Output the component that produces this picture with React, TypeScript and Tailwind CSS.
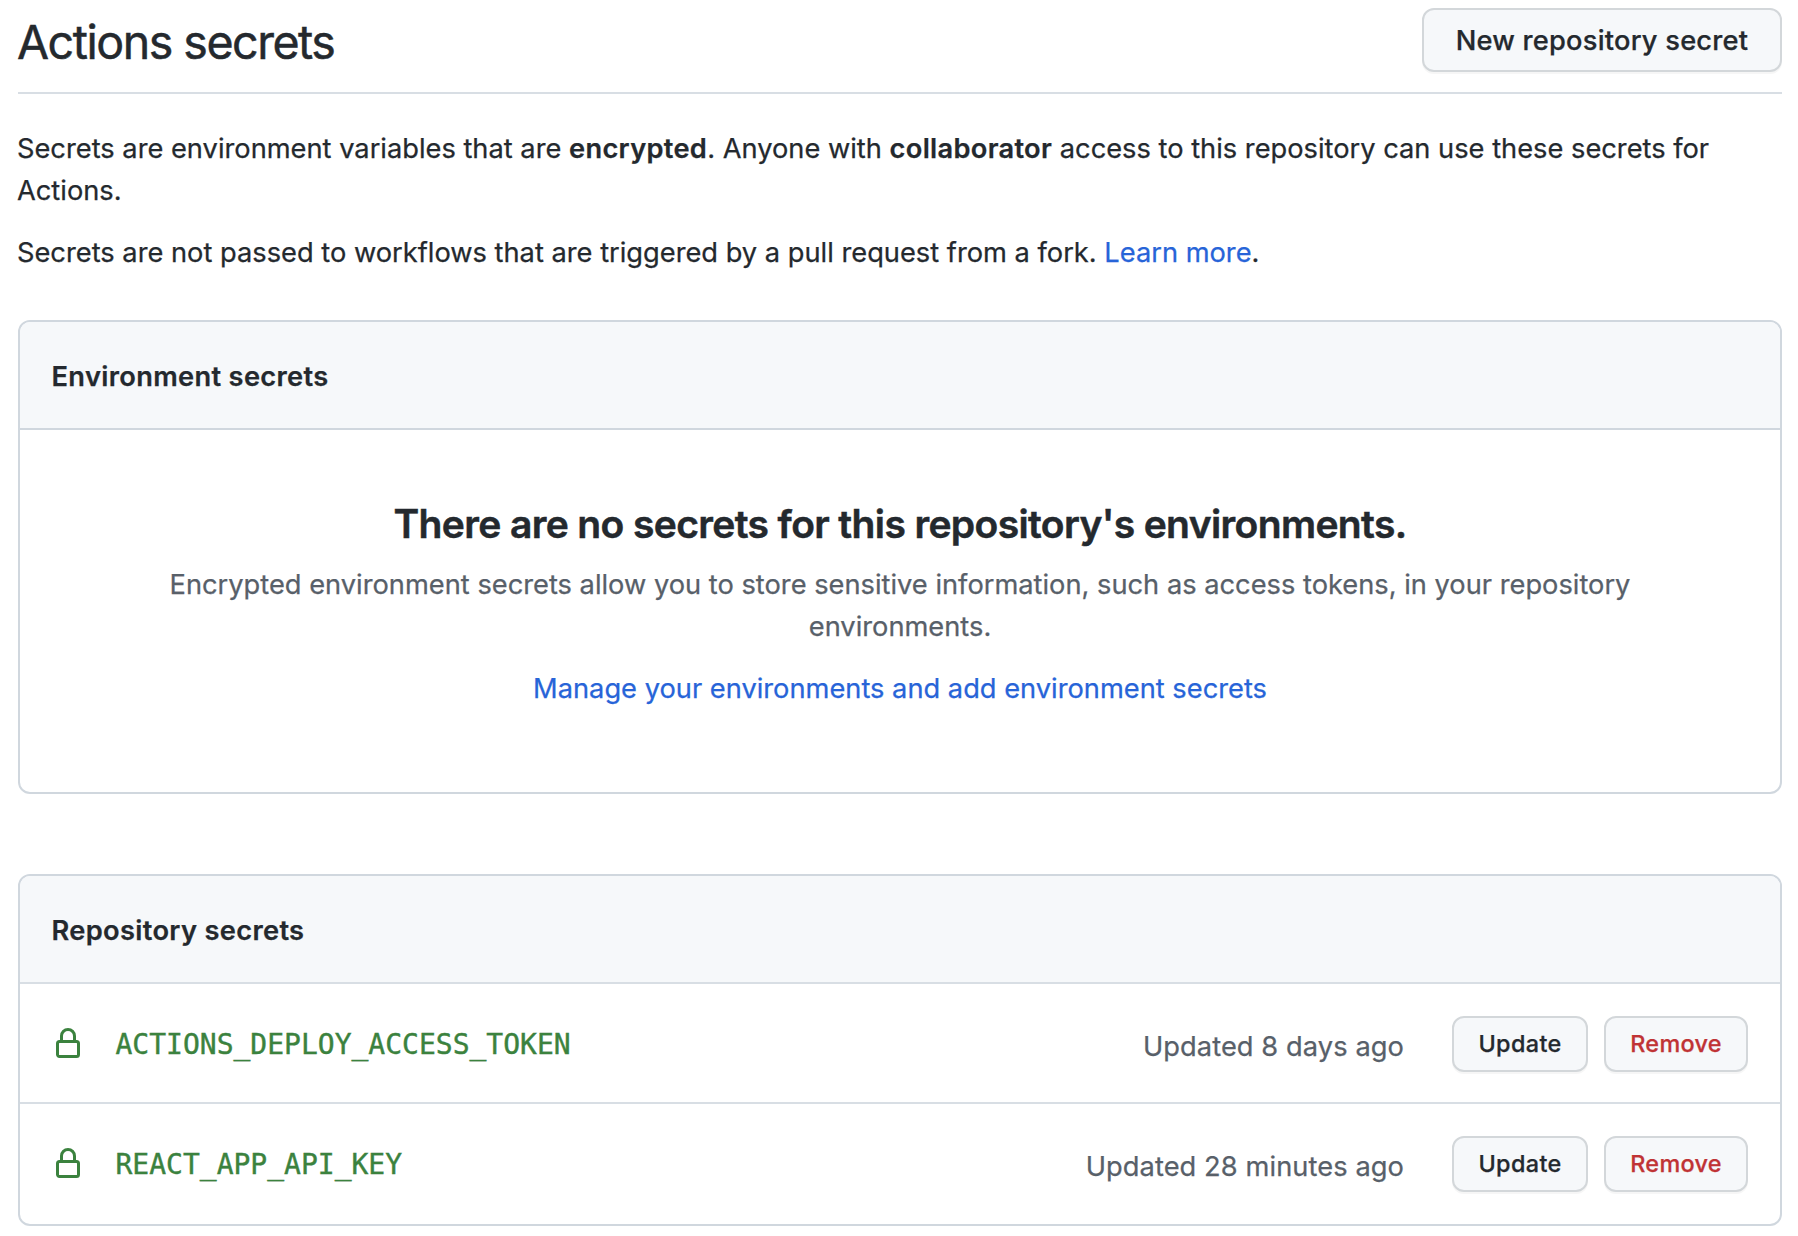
import React from "react";

const btn =
  "flex items-center justify-center whitespace-nowrap rounded-xl border-2 border-[#d3d7da] bg-[#f6f8fa] font-medium shadow-[0_2px_0_rgba(27,31,35,0.04)]";

function Lock() {
  return (
    <svg width="32" height="32" viewBox="0 0 16 16" fill="#3b823e" className="block shrink-0">
      <path
        fillRule="evenodd"
        d="M4 4v2h-.25A1.75 1.75 0 002 7.75v5.5c0 .966.784 1.75 1.75 1.75h8.5A1.75 1.75 0 0014 13.25v-5.5A1.75 1.75 0 0012.25 6H12V4a4 4 0 10-8 0zm6.5 2V4a2.5 2.5 0 10-5 0v2h5zM12 7.5h.25a.25.25 0 01.25.25v5.5a.25.25 0 01-.25.25h-8.5a.25.25 0 01-.25-.25v-5.5a.25.25 0 01.25-.25H12z"
      />
    </svg>
  );
}

function Secret({ name, updated }: { name: string; updated: string }) {
  return (
    <div className="flex h-[120px] items-center border-t-2 border-[#d8dee4] px-8 pt-0.5 last:h-[122px] last:pt-0">
      <Lock />
      <span className="ml-[31.5px] mt-0.5 font-['DejaVu_Sans_Mono',monospace] text-[28px] text-[#3b823e] [-webkit-text-stroke:0.4px]">
        {name}
      </span>
      <span className="ml-auto mr-12 mt-1.5 text-[27.25px] tracking-[0.08px] text-[#586069]">{updated}</span>
      <button className={btn + " mr-4 h-14 w-[136px] text-[23.4px] tracking-[0.36px]"}>Update</button>
      <button className={btn + " h-14 w-36 text-[23.4px] tracking-[0.3px] text-[#c03335]"}>Remove</button>
    </div>
  );
}

function BoxHeader({ title }: { title: string }) {
  return (
    <div className="flex h-[106px] items-center rounded-t-[10px] bg-[#f6f8fa] px-[31.5px] pt-[3px]">
      <h2 className="font-semibold tracking-[0.33px]">{title}</h2>
    </div>
  );
}

export default function App() {
  return (
    <main className="h-[1236px] w-full overflow-hidden bg-white pl-[18px] pr-4 pt-2 font-[Inter,sans-serif] text-[27.25px] leading-[42px] text-[#24292e] [-webkit-text-stroke:0.25px]">
      <header className="flex h-[86px] items-start justify-between border-b-2 border-[#d8dee4]">
        <h1 className="-ml-px mt-[3.5px] text-[46.5px] leading-[60px] tracking-[-1.47px] [-webkit-text-stroke:0.5px]">Actions secrets</h1>
        <button className={btn + " h-16 w-[360px] pt-0.5 tracking-[0.22px]"}>New repository secret</button>
      </header>

      <p className="-ml-px mt-[34px]">
        Secrets are environment variables that are{" "}
        <strong className="font-semibold tracking-[0.3px]">encrypted</strong>. Anyone with{" "}
        <strong className="font-semibold tracking-[0.3px]">collaborator</strong> access to this repository can use these
        secrets for
        <br />
        Actions.
      </p>
      <p className="-ml-px mt-5">
        Secrets are not passed to workflows that are triggered by a pull request from a fork.{" "}
        <a className="text-[#2764d8]">Learn more</a>.
      </p>

      <section className="mt-[46px] h-[474px] rounded-xl border-2 border-[#d0d7de]">
        <BoxHeader title="Environment secrets" />
        <div className="border-t-2 border-[#d0d7de] pt-16 text-center">
          <h3 className="text-[39px] font-semibold leading-[60px] tracking-[-0.62px] [-webkit-text-stroke:0.5px]">
            There are no secrets for this repository's environments.
          </h3>
          <p className="mt-2.5 text-[#586069]">
            Encrypted environment secrets allow you to store sensitive information, such as access tokens, in your
            repository
            <br />
            environments.
          </p>
          <p className="mt-5">
            <a className="text-[#2764d8]">Manage your environments and add environment secrets</a>
          </p>
        </div>
      </section>

      <section className="mt-20 rounded-xl border-2 border-[#d0d7de]">
        <BoxHeader title="Repository secrets" />
        <Secret name="ACTIONS_DEPLOY_ACCESS_TOKEN" updated="Updated 8 days ago" />
        <Secret name="REACT_APP_API_KEY" updated="Updated 28 minutes ago" />
      </section>
    </main>
  );
}
